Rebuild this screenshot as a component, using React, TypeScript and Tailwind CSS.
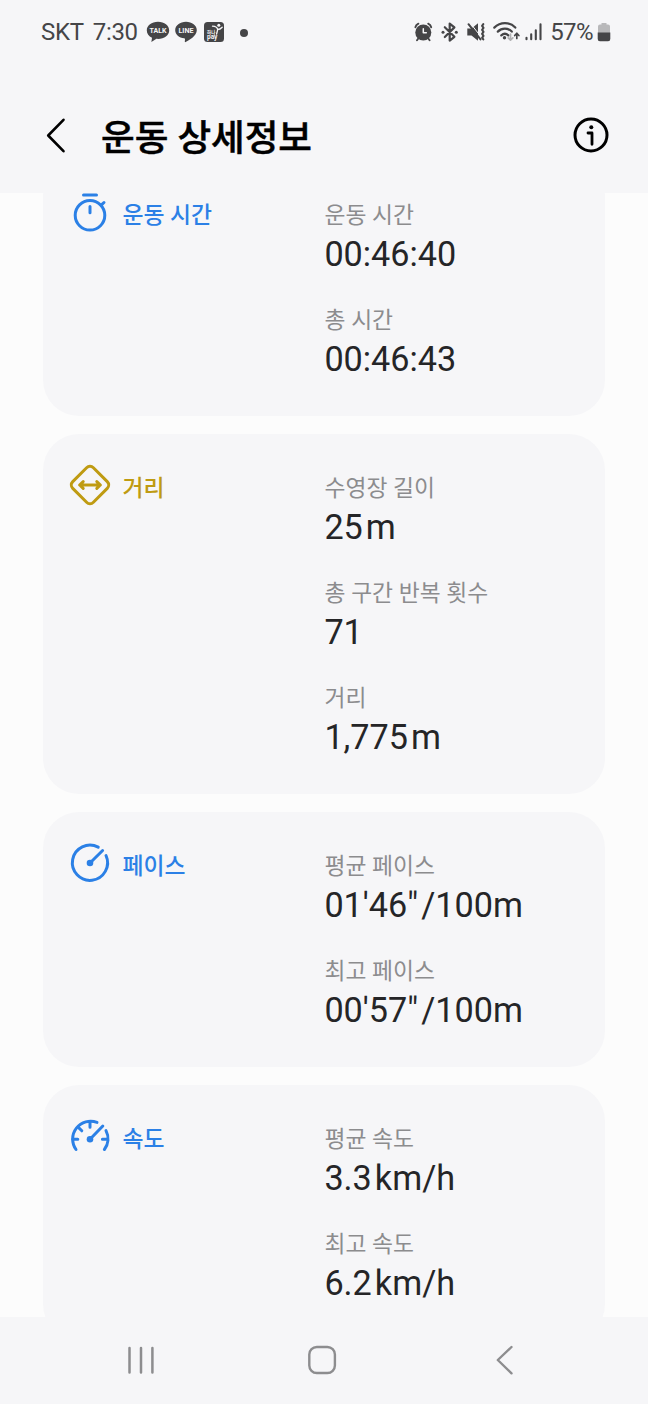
import type { ReactNode } from "react";

const STROKE = {
  fill: "none",
  stroke: "currentColor",
  strokeWidth: 3,
  strokeLinecap: "round" as const,
  strokeLinejoin: "round" as const,
};

const TimerIcon = () => (
  <svg width="44" height="44" viewBox="0 0 44 44" {...STROKE}>
    <circle cx="22" cy="25.300" r="14.800" />
    <path d="M15.500 5h13M22 16.500v6.300M33.200 15.200l2.800-2.700" />
  </svg>
);

const DistanceIcon = () => (
  <svg width="44" height="44" viewBox="0 0 44 44" {...STROKE}>
    <rect x="7.400" y="7.400" width="29.200" height="29.200" rx="4.800" transform="rotate(45 22 22)" />
    <path d="M11.800 22h20.400M15.200 18.600 11.600 22l3.600 3.400M28.800 18.600l3.600 3.400-3.600 3.400" />
  </svg>
);

const PaceIcon = () => (
  <svg width="44" height="44" viewBox="0 0 44 44" {...STROKE}>
    <path d="M30.200 6.200A17.600 17.600 0 1 0 38 14.500" />
    <path d="M22 22 34.600 9.500" />
    <circle cx="22" cy="22" r="3.300" fill="currentColor" stroke="none" />
  </svg>
);

const SpeedIcon = () => (
  <svg width="44" height="44" viewBox="0 0 44 44" {...STROKE}>
    <path d="M8 35.500A17.900 17.900 0 0 1 29 8.400M38 16.600A17.900 17.900 0 0 1 36.400 35.500" />
    <path d="M22 25.200 34.800 12M22 8.500v4.800M10.600 13.600l3.200 3.200M4.800 25.200h5M34.400 25.200h4.600" />
    <circle cx="22" cy="25.200" r="3.300" fill="currentColor" stroke="none" />
  </svg>
);

type Item = { label: string; value: string; unit?: string };
type Section = { title: string; color: string; icon: ReactNode; items: Item[] };

const sections: Section[] = [
  {
    title: "운동 시간",
    color: "text-[#2b80e6]",
    icon: <TimerIcon />,
    items: [
      { label: "운동 시간", value: "00:46:40" },
      { label: "총 시간", value: "00:46:43" },
    ],
  },
  {
    title: "거리",
    color: "text-[#bf9b12]",
    icon: <DistanceIcon />,
    items: [
      { label: "수영장 길이", value: "25", unit: "m" },
      { label: "총 구간 반복 횟수", value: "71" },
      { label: "거리", value: "1,775", unit: "m" },
    ],
  },
  {
    title: "페이스",
    color: "text-[#2b80e6]",
    icon: <PaceIcon />,
    items: [
      { label: "평균 페이스", value: "01'46\"", unit: "/100m" },
      { label: "최고 페이스", value: "00'57\"", unit: "/100m" },
    ],
  },
  {
    title: "속도",
    color: "text-[#2b80e6]",
    icon: <SpeedIcon />,
    items: [
      { label: "평균 속도", value: "3.3", unit: "km/h" },
      { label: "최고 속도", value: "6.2", unit: "km/h" },
    ],
  },
];

const TalkBubble = () => (
  <svg width="24" height="22" viewBox="0 0 24 22">
    <path
      d="M12 .8C5.600.8.800 4.600.800 9.400c0 3.200 2 5.900 5.200 7.300L5.400 21l5-3.200c.5.100 1 .100 1.600.100 6.400 0 11.200-3.800 11.200-8.500S18.400.800 12 .800z"
      fill="#454547"
    />
    <text x="12" y="12" textAnchor="middle" textLength="17" lengthAdjust="spacingAndGlyphs" fontSize="7.500" fontWeight="700" fill="#f6f6f8">
      TALK
    </text>
  </svg>
);

const LineBubble = () => (
  <svg width="24" height="22" viewBox="0 0 24 22">
    <path
      d="M12 .8C6 .8 1.200 4.500 1.200 9.200c0 4.300 3.900 7.600 9 8.100.8.100.9.500.8 1.300l-.2 2c0 .500.300.7.800.4 3.200-1.700 11.200-6 11.200-11.800C22.800 4.500 18 .8 12 .8z"
      fill="#454547"
    />
    <text x="12" y="11.800" textAnchor="middle" textLength="15" lengthAdjust="spacingAndGlyphs" fontSize="7" fontWeight="700" fill="#f6f6f8">
      LINE
    </text>
  </svg>
);

function StatusBar() {
  return (
    <div className="flex h-16 items-center pl-[41px] pr-[37px] text-[24px] text-[#454547]">
      <div className="flex w-[97px] gap-[9px] whitespace-nowrap tracking-[-0.3px]">
        <span>SKT</span>
        <span>7:30</span>
      </div>
      <div className="ml-2 flex items-center gap-1">
        <TalkBubble />
        <LineBubble />
        <svg className="ml-px" width="22" height="22" viewBox="0 0 22 22">
          <rect x="1" y="1" width="20" height="20" rx="3.500" fill="#454547" />
          <circle cx="15.800" cy="4.300" r="1.500" fill="#f6f6f8" />
          <path d="M9.500 5.200c3 .2 4.800 1.300 5.200 3.300L13.600 13M19.200 6.200c-1.500 1.600-3 2.300-4.500 2.300" fill="none" stroke="#f6f6f8" strokeWidth="1.300" strokeLinecap="round" />
          <text x="4" y="12.500" fontSize="4.500" fontWeight="700" fill="#f6f6f8">하나</text>
          <text x="4" y="18" fontSize="6.500" fontWeight="700" fill="#f6f6f8">pay</text>
        </svg>
      </div>
      <span className="ml-[15px] mt-px size-[8px] rounded-full bg-[#454547]" />
      <div className="ml-auto flex items-center">
        <svg width="196" height="28" viewBox="413 18 196 28" className="mr-[-59px]" fill="none" stroke="#454547" strokeLinecap="round" strokeLinejoin="round">
          <circle cx="423.300" cy="32.500" r="8" fill="#454547" stroke="none" />
          <path d="M423.300 28.800v3.900h3" stroke="#f6f6f8" strokeWidth="1.500" />
          <path d="M415.400 27.300q.5-2.500 3-3.600M431.200 27.300q-.5-2.500-3-3.600M418.300 38.500l-1.300 1.800M428.300 38.500l1.300 1.800" strokeWidth="1.900" />
          <path d="m444.800 27.200 9.600 9.600-4.700 3.800V23.600l4.700 3.800-9.600 9.600" strokeWidth="2.200" />
          <circle cx="443" cy="32.200" r="1.500" fill="#454547" stroke="none" />
          <circle cx="456.300" cy="32.200" r="1.500" fill="#454547" stroke="none" />
          <path d="M467.300 28.400h4.200l6.500-5.200v17.600l-6.500-5.200h-4.200z" fill="#454547" stroke="none" />
          <path d="M470.600 23.500l9 11.500" stroke="#f6f6f8" strokeWidth="1" />
          <path d="M468.500 24.200l12 15.200" strokeWidth="2" />
          <path d="M483.300 24.200l-1.200 1.700 1.400 2-1.400 2 1.400 2-1.400 2 1.400 2-1.400 2 1.200 1.500" strokeWidth="2.100" />
          <path d="M494.300 27.600c6-6 15.500-6 21 0M497.800 31.600c4-4 10.200-4 14 0M501.300 35.400c2.200-2 5-2 7 0" strokeWidth="2.200" />
          <circle cx="504.500" cy="37.700" r="1.700" fill="#454547" stroke="none" />
          <path d="M510.500 34v6M508.200 37.900l2.300 2.300 2.300-2.300" stroke="#b1b1b3" strokeWidth="1.700" />
          <path d="M516.800 38.500v-5M514.700 35.500l2.100-2.300 2.100 2.300" strokeWidth="1.700" />
          <path d="M526.500 37.800v1.500M531.200 34.200v5.100M535.800 30.200v9.100M540.500 24.200v15.100" strokeWidth="2.100" />
        </svg>
        <span className="tracking-[-0.6px]">57%</span>
        <svg className="ml-1" width="14" height="20" viewBox="0 0 14 20">
          <path d="M4.500 1h5v1.500H11a2 2 0 0 1 2 2V11H1V4.500a2 2 0 0 1 2-2h1.500z" fill="#b8b8ba" />
          <path d="M.7 10.500h12.600V17a2.200 2.200 0 0 1-2.200 2.200H2.900A2.200 2.200 0 0 1 .7 17z" fill="#454547" />
        </svg>
      </div>
    </div>
  );
}

function Card({ section }: { section: Section }) {
  return (
    <section className="flex shrink-0 rounded-[36px] bg-[#f6f6f8] pb-[6px] pl-[25px] pt-[39px]">
      <div className={`flex h-[30px] w-[256px] items-center ${section.color}`}>
        <div className="-mt-1.5">{section.icon}</div>
        <h2 className="ml-[10.500px] mt-[2px] text-[22.800px] font-medium leading-[30px]">{section.title}</h2>
      </div>
      <dl>
        {section.items.map((item) => (
          <div key={item.label} className="h-[105px]">
            <dt className="h-[29px] whitespace-nowrap pl-[0.500px] text-[22.800px] leading-[32px] text-[#8c8c8e]">{item.label}</dt>
            <dd className="flex h-[50px] gap-[3px] whitespace-nowrap pl-[0.400px] text-[34.200px] leading-[50px] text-[#252527]">
              <span>{item.value}</span>
              {item.unit && <span>{item.unit}</span>}
            </dd>
          </div>
        ))}
      </dl>
    </section>
  );
}

export default function App() {
  return (
    <div className="flex h-[1404px] w-[648px] flex-col overflow-hidden bg-[#f6f6f8] font-[Roboto,'Noto_Sans_CJK_KR',sans-serif]">
      <StatusBar />
      <header className="flex h-[129px] shrink-0 items-center pl-[44px] pr-[38px] text-black">
        <svg className="mt-[13px]" width="24" height="40" viewBox="0 0 24 40" {...STROKE} strokeWidth={2.600}>
          <path d="M19.500 4.800 4.200 20.500l15.300 15.700" />
        </svg>
        <h1 className="ml-[33px] mt-[20px] text-[36.600px] font-medium leading-[56px] [-webkit-text-stroke:0.5px_black]">운동 상세정보</h1>
        <svg className="ml-auto mt-[13px]" width="38" height="38" viewBox="0 0 38 38" {...STROKE}>
          <circle cx="19" cy="19" r="16" />
          <path d="M16 17h4v11.300" strokeWidth="2.800" />
          <circle cx="19.300" cy="11.300" r="2" fill="currentColor" stroke="none" />
        </svg>
      </header>
      <main className="h-[1124px] shrink-0 overflow-hidden bg-[#fcfcfc] px-[43px]">
        <div className="-mt-[32px] flex flex-col gap-[18px]">
          {sections.map((section) => (
            <Card key={section.title} section={section} />
          ))}
        </div>
      </main>
      <nav className="flex h-[87px] shrink-0 items-center pb-px pl-[126px]">
        <svg width="30" height="32" viewBox="0 0 30 32" {...STROKE} className="text-[#8d8d8f]" strokeWidth={2.500}>
          <path d="M3.500 4v24.500M15 4v24.500M26.400 4v24.500" />
        </svg>
        <svg width="32" height="32" viewBox="0 0 32 32" {...STROKE} className="ml-[150px] text-[#8d8d8f]" strokeWidth={2.400}>
          <rect x="3.300" y="3" width="25.600" height="26" rx="7.500" />
        </svg>
        <svg width="20" height="32" viewBox="0 0 20 32" {...STROKE} className="ml-[157px] text-[#8d8d8f]" strokeWidth={2.400}>
          <path d="M16.500 3 2.800 16l13.700 13.300" />
        </svg>
      </nav>
    </div>
  );
}
